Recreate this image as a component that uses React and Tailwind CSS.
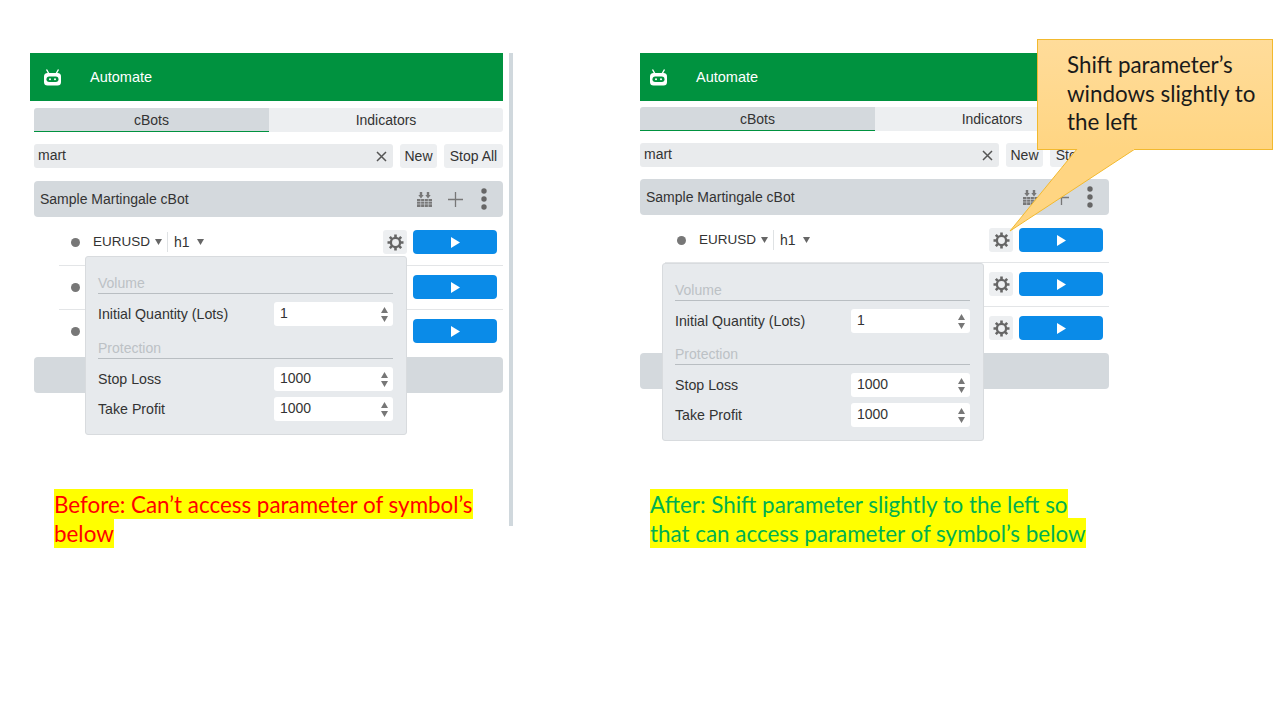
const BEFORE = {
  panel: "w-[473px]",
  inner: "pl-[4px]",
  header: "pl-[14px]",
  tabs: "mt-[7px]",
  bot: "mt-[13px]",
  rows: ["h-[49px] pt-[13px] border-b", "h-[44px] pt-[9px] border-b", "h-[47px] pt-[9px]"],
  pop: "left-[55px] top-[203px]",
  protection: "mt-[13px]",
};

const AFTER = {
  panel: "w-[469px]",
  inner: "",
  header: "pl-[10px]",
  tabs: "mt-[6px]",
  bot: "mt-[12px]",
  rows: ["h-[48px] pt-[13px] border-b", "h-[44px] pt-[9px] border-b", "h-[46px] pt-[9px]"],
  pop: "left-[22px] top-[210px]",
  protection: "mt-[12px]",
};

function Robot() {
  return (
    <svg width="17" height="17" viewBox="0 0 17 17" fill="none" className="shrink-0">
      <path d="M2.500 0.500L4.800 4.500M14.500 0.500L12.200 4.500" stroke="#fff" strokeWidth="1.400" />
      <rect x="0" y="4" width="17" height="12.500" rx="3.500" fill="#fff" />
      <rect x="2.500" y="7.500" width="12" height="5.500" rx="2.700" fill="#00923f" />
      <circle cx="6" cy="10.200" r="1" fill="#fff" />
      <circle cx="11" cy="10.200" r="1" fill="#fff" />
    </svg>
  );
}

function Gear() {
  return (
    <svg width="17" height="17" viewBox="0 0 17 17" fill="none" stroke="#666">
      <circle cx="8.500" cy="8.500" r="4.600" strokeWidth="2.300" />
      <path
        d="M8.500 0.500V4M8.500 13V16.500M0.500 8.500H4M13 8.500H16.500M2.800 2.800L5.300 5.300M11.700 11.700L14.200 14.200M14.200 2.800L11.700 5.300M5.300 11.700L2.800 14.200"
        strokeWidth="2.600"
      />
    </svg>
  );
}

function BatchIcon() {
  return (
    <svg width="15" height="15" viewBox="0 0 15 15" fill="#777" className="shrink-0">
      <path d="M2.800 0h2.400v3h1.500L4 6.500 1.300 3h1.500zM9.800 0h2.400v3h1.500L11 6.500 8.300 3h1.500z" />
      <path d="M0 7h15v8H0z" />
      <path d="M0 9.500h15M0 12h15M3.700 7v8M7.500 7v8M11.300 7v8" stroke="#d4d9dd" strokeWidth="0.600" />
    </svg>
  );
}

function Caret() {
  return (
    <svg width="7" height="6" viewBox="0 0 7 6" fill="#666" className="shrink-0">
      <path d="M0 0h7L3.500 6z" />
    </svg>
  );
}

function Spinner() {
  return (
    <svg width="7" height="15" viewBox="0 0 7 15" fill="#777" className="shrink-0">
      <path d="M3.500 0L7 6H0zM3.500 15L0 9h7z" />
    </svg>
  );
}

function Row({ rowClass, symbol, gear }) {
  return (
    <div className={`${rowClass} border-[#e3e5e7] ml-[25px] pl-[12px] pr-[6px]`}>
      <div className="h-[24px] flex items-center">
        <span className="w-[9px] h-[9px] rounded-full bg-[#777]" />
        {symbol && (
          <span className="ml-[13px] flex items-center">
            <span className="text-[13.500px] pt-[1px]">EURUSD</span>
            <span className="ml-[5px]"><Caret /></span>
            <span className="ml-[5px] mr-[6px] w-px h-[20px] bg-[#dfe2e4]" />
            <span className="pt-[1px]">h1</span>
            <span className="ml-[7px]"><Caret /></span>
          </span>
        )}
        {gear && (
          <span className="ml-auto w-[24px] h-[24px] rounded-[3px] bg-[#edeff1] flex items-center justify-center">
            <Gear />
          </span>
        )}
        <button className={`${gear ? "ml-[6px]" : "ml-auto"} w-[84px] h-[24px] rounded-[4px] bg-[#0a8be8] flex items-center justify-center`}>
          <svg width="9" height="11" viewBox="0 0 9 11" fill="#fff"><path d="M0 0l9 5.500L0 11z" /></svg>
        </button>
      </div>
    </div>
  );
}

function Field({ label, value, className }) {
  return (
    <div className={`flex items-center justify-between ${className}`}>
      <span className="text-[14.200px] pt-[2px]">{label}</span>
      <span className="w-[119px] h-[24px] bg-white rounded-[3px] pl-[6px] pr-[5px] flex items-center justify-between">
        <span className="-mt-[2px]">{value}</span>
        <Spinner />
      </span>
    </div>
  );
}

function ParamPopover({ cfg }) {
  return (
    <div className={`absolute ${cfg.pop} w-[322px] bg-[#e7eaed] border border-[#d8dbde] rounded-[3px] pt-[17px] pb-[13px] pl-[12px] pr-[13px]`}>
      <div className="h-[20px] leading-[19px] text-[#bcc1c5] border-b border-[#b9bec2]">Volume</div>
      <Field label="Initial Quantity (Lots)" value="1" className="mt-[8px]" />
      <div className={`${cfg.protection} h-[20px] leading-[19px] text-[#bcc1c5] border-b border-[#b9bec2]`}>Protection</div>
      <Field label="Stop Loss" value="1000" className="mt-[8px]" />
      <Field label="Take Profit" value="1000" className="mt-[6px]" />
    </div>
  );
}

function Panel({ cfg, allGears }) {
  return (
    <div className={`relative ${cfg.panel} text-[14px] text-[#333]`}>
      <div className={`${cfg.header} h-[48px] bg-[#00923f] text-white flex items-center`}>
        <Robot />
        <span className="ml-[29px] text-[14.500px] pt-[1px]">Automate</span>
      </div>
      <div className={cfg.inner}>
        <div className={`${cfg.tabs} flex h-[24px]`}>
          <div className="w-[235px] bg-[#d4d9dd] border-b border-[#00923f] rounded-tl-[3px] pt-[1px] flex items-center justify-center">cBots</div>
          <div className="flex-1 bg-[#edeff1] rounded-r-[3px] flex items-center justify-center">Indicators</div>
        </div>
        <div className="mt-[12px] flex h-[24px] gap-[7px]">
          <div className="flex-1 bg-[#e9ebed] rounded-[3px] pl-[4px] pr-[6px] flex items-center justify-between">
            <span className="-mt-[2px]">mart</span>
            <svg width="11" height="11" viewBox="0 0 11 11" stroke="#555" strokeWidth="1.500"><path d="M1 1l9 9M10 1l-9 9" /></svg>
          </div>
          <div className="w-[37px] bg-[#edeff1] rounded-[3px] pt-[1px] flex items-center justify-center">New</div>
          <div className="w-[59px] bg-[#edeff1] rounded-[3px] pt-[1px] flex items-center justify-center">Stop All</div>
        </div>
        <div className={`${cfg.bot} h-[36px] bg-[#d4d9dd] rounded-[4px] pl-[6px] pr-[16px] flex items-center`}>
          <span>Sample Martingale cBot</span>
          <span className="ml-auto"><BatchIcon /></span>
          <svg className="ml-[16px]" width="15" height="15" viewBox="0 0 15 15" stroke="#777" strokeWidth="1.300"><path d="M7.500 0v15M0 7.500h15" /></svg>
          <svg className="ml-[18px]" width="6" height="22" viewBox="0 0 6 22" fill="#666">
            <circle cx="3" cy="3" r="2.700" />
            <circle cx="3" cy="11" r="2.700" />
            <circle cx="3" cy="19" r="2.700" />
          </svg>
        </div>
        <Row rowClass={cfg.rows[0]} symbol gear />
        <Row rowClass={cfg.rows[1]} gear={allGears} />
        <Row rowClass={cfg.rows[2]} gear={allGears} />
        <div className="h-[36px] bg-[#d4d9dd] rounded-[4px]" />
      </div>
      <ParamPopover cfg={cfg} />
    </div>
  );
}

function Callout() {
  return (
    <div className="absolute left-[397px] -top-[14px] w-[236px] h-[111px]">
      <div className="w-full h-full bg-gradient-to-b from-[#ffdc9a] to-[#ffd582] border border-[#f2b92e] pl-[29px] pt-[11px] font-['Lato',sans-serif] text-[22.400px] leading-[28.500px] text-[#1a1a1a]">
        Shift parameter’s
        <br />
        windows slightly to
        <br />
        the left
      </div>
      {/* tail runs down to the gear of the first row */}
      <svg className="absolute left-[-28px] top-[110px]" width="130" height="84" viewBox="0 0 130 84">
        <path d="M68 0L1 82L126 0" fill="#ffd582" stroke="#f2b92e" strokeWidth="1" />
        <path d="M69 0H125" stroke="#ffd582" strokeWidth="2" />
      </svg>
    </div>
  );
}

function Caption({ spacing, className, children }) {
  return (
    <p className={`${spacing} ml-[24px] font-['Lato',sans-serif] text-[22.400px] leading-[29px]`}>
      <span className={`bg-[#ffff00] py-[1.500px] box-decoration-clone ${className}`}>{children}</span>
    </p>
  );
}

export default function App() {
  return (
    <div className="w-[1280px] h-[720px] bg-white overflow-hidden flex pl-[30px] pt-[53px] font-['Liberation_Sans',Arial,sans-serif]">
      <div className="w-[480px] h-[473px] relative shrink-0">
        <Panel cfg={BEFORE} />
        <div className="absolute left-[479px] top-0 w-[3.500px] h-[473px] bg-[#d0d8dd]" />
        <div className="w-[460px]">
          <Caption spacing="mt-[96px]" className="text-[#ff0000]">Before: Can’t access parameter of symbol’s below</Caption>
        </div>
      </div>
      <div className="ml-[130px] relative w-[469px] shrink-0">
        <Panel cfg={AFTER} allGears />
        <Callout />
        <div className="-ml-[14px] w-[460px]">
          <Caption spacing="mt-[100px]" className="text-[#00b050]">After: Shift parameter slightly to the left so that can access parameter of symbol’s below</Caption>
        </div>
      </div>
    </div>
  );
}
